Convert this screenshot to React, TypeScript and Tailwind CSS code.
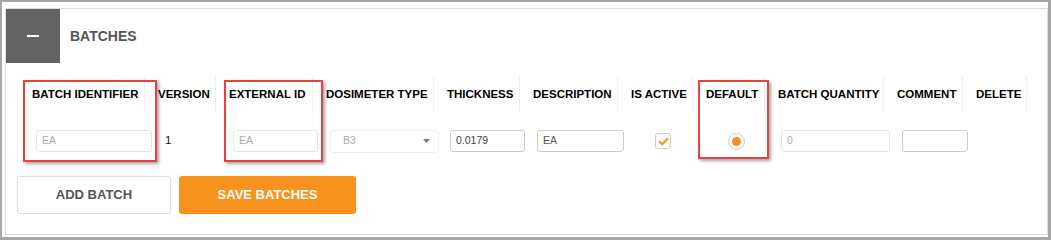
import React from "react";

const cols = [
  { label: "BATCH IDENTIFIER", w: "w-[126px]" },
  { label: "VERSION", w: "w-[71px]" },
  { label: "EXTERNAL ID", w: "w-[97px]" },
  { label: "DOSIMETER TYPE", w: "w-[121px]" },
  { label: "THICKNESS", w: "w-[86px]" },
  { label: "DESCRIPTION", w: "w-[98px]" },
  { label: "IS ACTIVE", w: "w-[75px]" },
  { label: "DEFAULT", w: "w-[72px]" },
  { label: "BATCH QUANTITY", w: "w-[119px]" },
  { label: "COMMENT", w: "w-[79px]" },
  { label: "DELETE", w: "w-[64px]" },
];

function Box({ className }: { className: string }) {
  return (
    <div
      className={
        "absolute border-2 border-[#e8413f] shadow-[2px_2px_3px_rgba(0,0,0,0.35)] " +
        className
      }
    />
  );
}

export default function App() {
  return (
    <div
      className="relative w-[1051px] h-[240px] bg-white border-t-2 border-l-2 border-r-[3px] border-b-[3px] border-[#a6a6a6] pl-[3px] pt-[6px] pb-[2px] flex"
      style={{ fontFamily: '"Liberation Sans", Arial, sans-serif' }}
    >
      <div className="flex-1 border border-[#dddddd] flex flex-col">
        {/* header */}
        <div className="flex items-center h-[54px]">
          <div className="w-[54px] h-[54px] bg-[#636363] flex items-center justify-center">
            <div className="w-[12px] h-[2px] bg-white" />
          </div>
          <div className="ml-[10px] text-[14px] font-bold text-[#555555]">BATCHES</div>
        </div>

        {/* table header */}
        <div className="flex ml-[13px] mt-[14px] h-[35px]">
          {cols.map((c) => (
            <div
              key={c.label}
              className={`${c.w} h-[35px] border-r border-[#eeeeee] pl-[13px] flex items-center text-[11.5px] font-bold text-[#000000] whitespace-nowrap`}
            >
              {c.label}
            </div>
          ))}
        </div>

        {/* body row */}
        <div className="flex ml-[13px] mt-[18px] h-[22px] items-center text-[10.5px]">
          <div className="w-[126px] pl-[17px]">
            <div className="w-[116px] h-[22px] border border-[#e4e4e4] rounded-[3px] pl-[5px] flex items-center text-[#aaaaaa]">
              EA
            </div>
          </div>
          <div className="w-[71px] pl-[20px] text-[11.5px] text-[#111111]">1</div>
          <div className="w-[97px] pl-[17px]">
            <div className="w-[85px] h-[22px] border border-[#e4e4e4] rounded-[3px] pl-[5px] flex items-center text-[#aaaaaa]">
              EA
            </div>
          </div>
          <div className="w-[121px] pl-[17px]">
            <div className="w-[109px] h-[23px] border border-[#eeeeee] rounded-[3px] pl-[12px] pr-[8px] flex items-center justify-between text-[#aaaaaa]">
              <span>B3</span>
              <svg width="7" height="4" viewBox="0 0 7 4">
                <path d="M0 0 L7 0 L3.5 4 Z" fill="#777777" />
              </svg>
            </div>
          </div>
          <div className="w-[86px] pl-[16px]">
            <div className="w-[75px] h-[22px] border border-[#cccccc] rounded-[3px] pl-[5px] flex items-center text-[#444444]">
              0.0179
            </div>
          </div>
          <div className="w-[98px] pl-[17px]">
            <div className="w-[87px] h-[22px] border border-[#cccccc] rounded-[3px] pl-[5px] flex items-center text-[#555555]">
              EA
            </div>
          </div>
          <div className="w-[75px] pl-[37px]">
            <div className="w-[16px] h-[16px] border border-[#cccccc] rounded-[3px] flex items-center justify-center">
              <svg width="11" height="9" viewBox="0 0 11 9">
                <path d="M1 4.5 L4.2 7.2 L10 1.2" fill="none" stroke="#f7931e" strokeWidth="2.2" />
              </svg>
            </div>
          </div>
          <div className="w-[72px] pl-[35px]">
            <div className="w-[17px] h-[17px] border border-[#cccccc] rounded-full flex items-center justify-center">
              <div className="w-[9px] h-[9px] rounded-full bg-[#f7931e]" />
            </div>
          </div>
          <div className="w-[119px] pl-[16px]">
            <div className="w-[109px] h-[22px] border border-[#e4e4e4] rounded-[3px] pl-[5px] flex items-center text-[#aaaaaa]">
              0
            </div>
          </div>
          <div className="w-[79px] pl-[18px]">
            <div className="w-[66px] h-[22px] border border-[#cccccc] rounded-[3px]" />
          </div>
          <div className="w-[64px]" />
        </div>

        {/* buttons */}
        <div className="flex ml-[11px] mt-[24px] gap-[8px]">
          <div className="w-[154px] h-[38px] border border-[#dddddd] rounded-[3px] bg-white flex items-center justify-center text-[13px] font-bold text-[#555555]">
            ADD BATCH
          </div>
          <div className="w-[177px] h-[38px] rounded-[3px] bg-[#f8931f] flex items-center justify-center text-[13px] font-bold text-white">
            SAVE BATCHES
          </div>
        </div>
      </div>

      <Box className="left-[21px] top-[78px] w-[134px] h-[82px]" />
      <Box className="left-[222px] top-[78px] w-[99px] h-[82px]" />
      <Box className="left-[696px] top-[78px] w-[71px] h-[79px]" />
    </div>
  );
}
